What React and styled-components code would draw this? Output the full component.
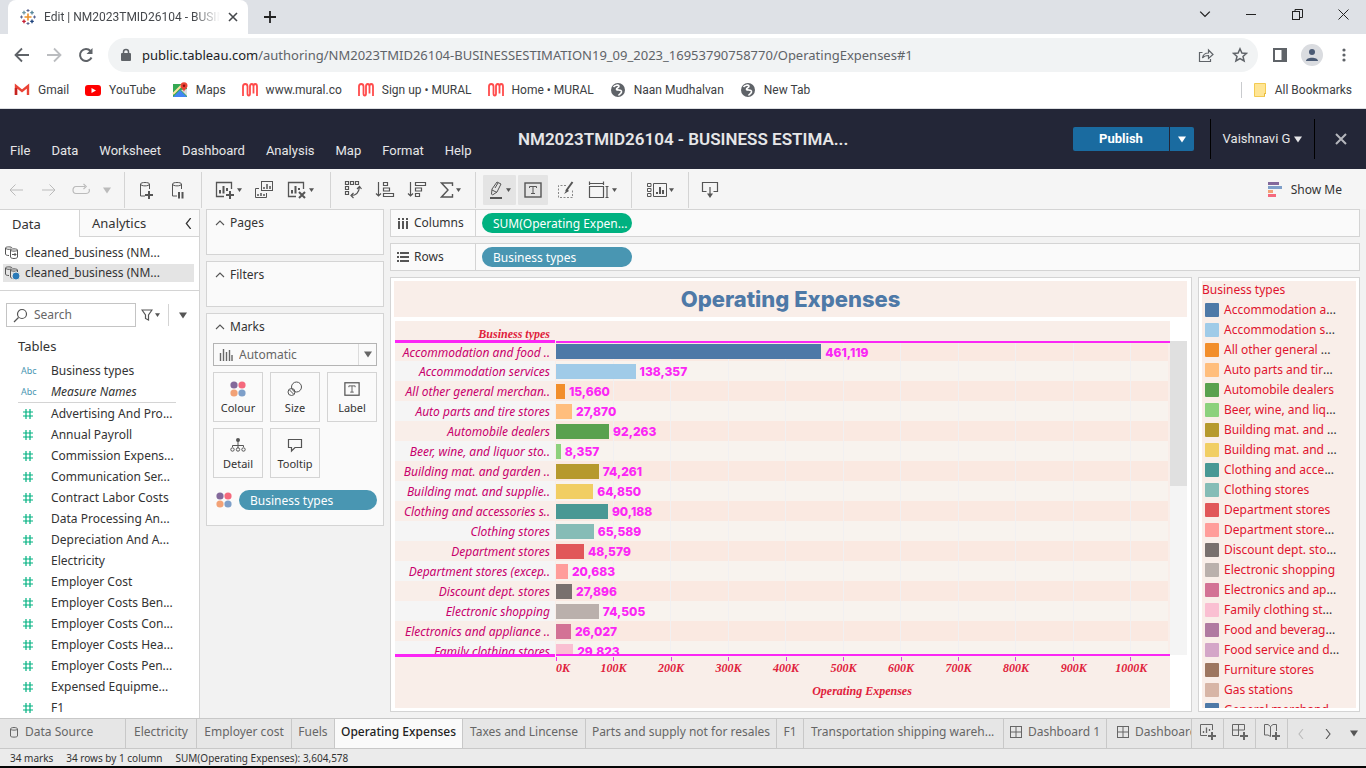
import React from "react";
import styled, { createGlobalStyle, css } from "styled-components";

const Global = createGlobalStyle`
  *, *::before, *::after { box-sizing: border-box; }
  body { margin: 0; font: 12px/16px "Noto Sans", sans-serif; color: #333; background: #f2f2f2; }
  button, input, select { font: inherit; color: inherit; margin: 0; }
  button { padding: 0; border: 0; background: none; border-radius: 0; display: flex; align-items: center; justify-content: center; }
  a { color: inherit; text-decoration: none; }
  ul { list-style: none; margin: 0; padding: 0; }
  h1, h2, p { margin: 0; font-weight: 400; font-size: inherit; }
  svg { display: block; flex: none; }
`;

/* ---------- data ---------- */
const rows = [
  ["Accommodation and food ..", 461119, "#4e79a7"],
  ["Accommodation services", 138357, "#a0cbe8"],
  ["All other general merchan..", 15660, "#f28e2b"],
  ["Auto parts and tire stores", 27870, "#ffbe7d"],
  ["Automobile dealers", 92263, "#59a14f"],
  ["Beer, wine, and liquor sto..", 8357, "#8cd17d"],
  ["Building mat. and garden ..", 74261, "#b6992d"],
  ["Building mat. and supplie..", 64850, "#f1ce63"],
  ["Clothing and accessories s..", 90188, "#499894"],
  ["Clothing stores", 65589, "#86bcb6"],
  ["Department stores", 48579, "#e15759"],
  ["Department stores (excep..", 20683, "#ff9d9a"],
  ["Discount dept. stores", 27896, "#79706e"],
  ["Electronic shopping", 74505, "#bab0ac"],
  ["Electronics and appliance ..", 26027, "#d37295"],
  ["Family clothing stores", 29823, "#fabfd2"],
];
const legend = [
  ["Accommodation a", 1, "#4e79a7"], ["Accommodation s", 1, "#a0cbe8"], ["All other general ", 1, "#f28e2b"],
  ["Auto parts and tir", 1, "#ffbe7d"], ["Automobile dealers", 0, "#59a14f"], ["Beer, wine, and liq", 1, "#8cd17d"],
  ["Building mat. and ", 1, "#b6992d"], ["Building mat. and ", 1, "#f1ce63"], ["Clothing and acce", 1, "#499894"],
  ["Clothing stores", 0, "#86bcb6"], ["Department stores", 0, "#e15759"], ["Department store", 1, "#ff9d9a"],
  ["Discount dept. sto", 1, "#79706e"], ["Electronic shopping", 0, "#bab0ac"], ["Electronics and ap", 1, "#d37295"],
  ["Family clothing st", 1, "#fabfd2"], ["Food and beverag", 1, "#b07aa1"], ["Food service and d", 1, "#d4a6c8"],
  ["Furniture stores", 0, "#9d7660"], ["Gas stations", 0, "#d7b5a6"], ["General merchand", 1, "#4e79a7"],
];
const fields = ["Advertising And Pro...", "Annual Payroll", "Commission Expens...", "Communication Ser...", "Contract Labor Costs",
  "Data Processing An...", "Depreciation And A...", "Electricity", "Employer Cost", "Employer Costs Ben...", "Employer Costs Con...",
  "Employer Costs Hea...", "Employer Costs Pen...", "Expensed Equipme...", "F1"];
const ticks = ["100K", "200K", "300K", "400K", "500K", "600K", "700K", "800K", "900K", "1000K"];
const AXIS_MAX = 1063800;

/* ---------- icons ---------- */
const Svg = styled.svg.attrs({ "aria-hidden": true })`
  fill: none;
  stroke: currentColor;
  stroke-width: ${(p) => p.$sw || 1};
`;
const Icon = ({ w = 20, h = w, sw, children }) => (
  <Svg width={w} height={h} viewBox={`0 0 ${w} ${h}`} $sw={sw}>{children}</Svg>
);
const Caret = ({ s = 5 }) => (
  <Svg width={s} height={s - 1} viewBox="0 0 8 6"><path d="M0 0H8L4 6Z" fill="currentColor" stroke="none" /></Svg>
);
const TableauMark = () => (
  <Icon w={16} sw={1.4}>
    <path d="M8 4.5V11.5M4.5 8H11.5" stroke="#eb912c" strokeWidth="1.6" />
    <path d="M4 1.8V5.4M2.2 3.6H5.8" stroke="#7199a6" /><path d="M12 1.8V5.4M10.2 3.6H13.8" stroke="#59879b" />
    <path d="M4 10.6V14.2M2.2 12.4H5.8" stroke="#c72035" /><path d="M12 10.6V14.2M10.2 12.4H13.8" stroke="#1f447e" />
    <path d="M8 0V3M6.5 1.5H9.5" stroke="#5b6591" strokeWidth="1" /><path d="M8 13V16M6.5 14.5H9.5" stroke="#5b6591" strokeWidth="1" />
    <path d="M1.5 6.5V9.5M0 8H3M14.5 6.5V9.5M13 8H16" stroke="#5b6591" strokeWidth="1" />
  </Icon>
);
const GmailIcon = () => (
  <Icon w={16}><path d="M2 13V4L8 9L14 4V13" stroke="#ea4335" strokeWidth="2.4" /><path d="M2 6V13" stroke="#c5221f" strokeWidth="2.4" /></Icon>
);
const YouTubeIcon = () => (
  <Icon w={16}><rect x="0" y="3" width="16" height="11" rx="3" fill="#f00" stroke="none" /><path d="M6.5 6V11L11 8.5Z" fill="#fff" stroke="none" /></Icon>
);
const MapsIcon = () => (
  <Icon w={16}>
    <path d="M1 2H11L15 6V15H1Z" fill="#34a853" stroke="none" /><path d="M1 15L8 8L15 15Z" fill="#4285f4" stroke="none" />
    <path d="M9 8L15 14V7Z" fill="#dadce0" stroke="none" /><path d="M1 12L10 3" stroke="#fbe3a0" strokeWidth="2" />
    <path d="M12 10C12 8 8.500 6.500 8.500 3.800A3.500 3.500 0 0 1 15.500 3.800C15.500 6.500 12 8 12 10Z" fill="#ea4335" stroke="none" /><circle cx="12" cy="3.800" r="1.200" fill="#811" stroke="none" />
  </Icon>
);
const MuralIcon = () => (
  <Icon w={16}>
    <path d="M1 14V4.500Q1 2 3.200 2Q5.500 2 5.500 4.500V11.500Q5.500 13.500 6.800 13.500Q8 13.500 8 11.500V4.500Q8 2 9.800 2Q11.500 2 11.500 4.500V11.500M11.500 4.500Q11.500 2 13.200 2Q15 2 15 4.500V14" stroke="#ff4b4b" strokeWidth="1.800" />
  </Icon>
);
const GlobeIcon = () => (
  <Icon w={16}><circle cx="8" cy="8" r="7" fill="#5f6368" stroke="none" /><path d="M3.500 5C5 3 8 2.500 9 4C9.500 6 6 5.500 6.500 7.500C8 8.500 12 7.500 11.500 10C11 12 9 12 8.500 13.500" stroke="#fff" strokeWidth="1.600" /></Icon>
);
const FolderIcon = () => (
  <Icon w={14} h={16}><path d="M1.500 1.500H12.500V11.500H11.500V14.500H1.500Z" fill="#ffe594" stroke="#f3cb52" /><path d="M11.500 14.500V11.500H13" stroke="#e8b93c" /></Icon>
);
const DbShape = () => <path d="M3.500 4V16H8M3.500 4C3.500 2 12.500 2 12.500 4V9M3.500 4C3.500 6.500 12.500 6.500 12.500 4" />;
const NewSheetIcon = () => (
  <Icon w={20}><path d="M9 16.500H1.500V2.500H16.500V9" strokeWidth="1.300" /><path d="M5 13.500V10M8.500 13.500V6M12 11V8" strokeWidth="2" /><path d="M15 11V19M11 15H19" strokeWidth="2" /></Icon>
);
const ClearSheetIcon = () => (
  <Icon w={20}><path d="M9 16.500H1.500V2.500H16.500V9" strokeWidth="1.300" /><path d="M5 13.500V10M8.500 13.500V6M12 10V8" strokeWidth="2" /><path d="M12 12L18 18M18 12L12 18" strokeWidth="2" /></Icon>
);
const TextBoxIcon = ({ s = 18 }) => (
  <Svg width={s} height={s} viewBox="0 0 18 18"><rect x="1" y="2" width="16" height="14" strokeWidth="1.400" /><path d="M5.500 7V5.500H12.500V7M9 5.500V12.500M7 12.500H11" /></Svg>
);
const DotsIcon = () => (
  <Icon w={16}>
    <g stroke="none"><circle cx="4" cy="4" r="3.600" fill="#83699b" /><circle cx="12" cy="4" r="3.600" fill="#f5697d" /><circle cx="4" cy="12" r="3.600" fill="#f2a277" /><circle cx="12" cy="12" r="3.600" fill="#7e9fc9" /></g>
  </Icon>
);
const GridIcon = () => <Icon w={12}><rect x=".5" y=".5" width="11" height="11" /><path d="M6 0V12M0 6H12" /></Icon>;
const SourceIcon = ({ active }) => (
  <Icon w={16}>
    <path d="M.5 3C.5 1.500 7 1.500 7 3M.5 3V9C.5 10 2 10.500 4 10.500M.5 3C.5 4.500 5 4.500 6 4" />
    <path d="M5.500 5C5.500 3.500 12.500 3.500 12.500 5V12C12.500 14 5.500 14 5.500 12ZM5.500 5C5.500 6.500 12.500 6.500 12.500 5M7 9.500H11M9.500 8L11 9.500L9.500 11" />
    {active && <circle cx="11" cy="11" r="4" fill="#2a7ab8" stroke="#e4e4e4" />}
  </Icon>
);
const HashIcon = () => <Icon w={12} sw={1.200}><path d="M4 1V11M8 1V11M1 4H11M1 8H11" stroke="#00b180" /></Icon>;
const Chevron = ({ dir, s = 10 }) => (
  <Svg width={s} height={s} viewBox="0 0 10 10" $sw={1.100}><path d={{ up: "M1 7L5 3L9 7", left: "M7 0L3 5L7 10", right: "M3 0L7 5L3 10", down: "M1 3L5 7L9 3" }[dir]} /></Svg>
);

/* ---------- browser chrome ---------- */
const Screen = styled.div`display: flex; flex-direction: column; height: 100vh; overflow: hidden;`;
const TabStrip = styled.div`display: flex; align-items: stretch; height: 34px; flex: none; background: #dee1e6; padding-left: 8px;`;
const BrowserTab = styled.div`
  display: flex; align-items: center; gap: 8px; width: 240px; padding: 0 10px 0 12px; background: #fff; border-radius: 8px 8px 0 0; color: #45484c; font: 12px/16px Roboto, sans-serif;
  span { flex: 1; overflow: hidden; white-space: nowrap; mask-image: linear-gradient(to right, #000 85%, transparent); }
`;
const StripButton = styled.button`width: ${(p) => p.$w || 46}px; color: #222;`;
const WindowButtons = styled.div`display: flex; margin-left: auto; padding-bottom: 6px;`;
const NavBar = styled.div`display: flex; align-items: center; height: 42px; flex: none; background: #fff; padding: 0 6px; color: #5f6368;`;
const NavButton = styled.button`width: 32px; height: 32px; color: ${(p) => (p.$dim ? "#bbbdc0" : "#5f6368")};`;
const UrlBox = styled.div`
  display: flex; align-items: center; flex: 1; height: 34px; margin: 0 6px; padding: 0 10px 0 12px; border-radius: 17px; background: #f1f3f4; gap: 10px;
`;
const UrlText = styled.p`flex: 1; font: 13px/18px "Noto Sans", sans-serif; color: #5f6368; white-space: nowrap; b { font-weight: 400; color: #202124; }`;
const Avatar = styled.button`width: 22px; height: 22px; border-radius: 11px; background: #dadce0; margin: 0 5px; overflow: hidden;`;
const Bookmarks = styled.nav`
  display: flex; align-items: center; gap: 16px; height: 33px; flex: none; padding: 0 14px 4px; background: #fff; border-bottom: 1px solid #dcdee1; color: #3c4043; font: 12px/16px Roboto, sans-serif;
`;
const Bookmark = styled.a`display: flex; align-items: center; gap: 8px; white-space: nowrap;`;
const AllBookmarks = styled(Bookmark)`margin-left: auto; border-left: 1px solid #c9cbce; padding-left: 11px;`;

/* ---------- application header ---------- */
const Header = styled.header`display: grid; grid-template-columns: 1fr 330px 1fr; height: 60px; flex: none; background: #232637; color: #e6e6e8; font: 13px/18px Roboto, sans-serif;`;
const Menu = styled.nav`display: flex; gap: 21px; align-items: flex-end; padding: 0 0 9px 10px;`;
const BookTitle = styled.h1`align-self: center; font: 600 17px/22px Roboto, sans-serif; white-space: nowrap; text-align: center;`;
const HeaderRight = styled.div`display: flex; align-items: center; justify-content: flex-end;`;
const PublishGroup = styled.div`display: flex; gap: 1px; margin-right: 16px;`;
const Publish = styled.button`
  height: 24px; width: ${(p) => (p.$small ? 24 : 96)}px; background: #1a6ba0; color: #fff; font-weight: 700; border-radius: ${(p) => (p.$small ? "0 2px 2px 0" : "2px 0 0 2px")};
`;
const UserButton = styled.button`height: 40px; width: 105px; gap: 4px; border: solid #000; border-width: 0 1px;`;
const CloseButton = styled.button`width: 51px; height: 40px; color: #b5b6bc;`;

/* ---------- toolbar ---------- */
const Toolbar = styled.div`display: flex; align-items: center; height: 40px; flex: none; background: #f5f5f5; color: #555; padding: 2px 24px 0 0;`;
const ToolGroup = styled.div`display: flex; align-items: center; height: 36px; padding: 0 ${(p) => p.$pad || 12}px; gap: ${(p) => p.$gap || 12}px; border-right: 1px solid #d4d4d4; width: ${(p) => p.$w}px;`;
const Tool = styled.button`
  gap: 2px; height: 30px; width: ${(p) => p.$w || 20}px; flex: none;
  ${(p) => p.$on && css`background: #e4e4e4; border-radius: 1px;`}
  ${(p) => p.$dim && css`color: #bbb;`}
`;
const ShowMe = styled.button`margin-left: auto; gap: 9px; color: #333;`;

/* ---------- workspace ---------- */
const Workspace = styled.main`display: grid; grid-template-columns: 200px 184px minmax(0, 1fr); flex: 1; min-height: 0; padding-right: 6px;`;
const DataPane = styled.section`display: flex; flex-direction: column; background: #fff; border-right: 1px solid #d4d4d4; border-top: 1px solid #d4d4d4; overflow: hidden;`;
const PaneTabs = styled.div`display: flex; height: 27px; flex: none; font-size: 13px;`;
const PaneTab = styled.button`
  justify-content: flex-start; padding-left: 12px; width: 79px;
  ${(p) => p.$back && css`flex: 1; justify-content: space-between; padding-right: 5px; background: #fafafa; border: solid #d4d4d4; border-width: 0 0 1px 1px;`}
`;
const Sources = styled.ul`display: grid; gap: 1px; padding: 5px 5px 8px 3px; border-bottom: 1px solid #d4d4d4;`;
const Source = styled.li`display: flex; align-items: center; gap: 4px; height: ${(p) => (p.$on ? 18 : 21)}px; padding-left: 2px; white-space: nowrap; color: #555; background: ${(p) => (p.$on ? "#e4e4e4" : "none")}; span { color: #333; }`;
const SearchRow = styled.div`display: flex; align-items: center; height: 24px; margin: 12px 11px 0 6px; color: #555;`;
const SearchBox = styled.label`display: flex; align-items: center; gap: 6px; width: 130px; height: 24px; padding: 0 6px; border: 1px solid #c4c4c4; input { width: 90px; border: 0; padding: 0; outline: 0; background: none; } input::placeholder { color: #666; opacity: 1; }`;
const FilterButton = styled.button`gap: 2px; width: 33px; height: 22px; border-right: 1px solid #d4d4d4; padding-right: 3px;`;
const PaneMenu = styled.button`margin-left: auto; width: 10px; height: 22px;`;
const TablesTitle = styled.h2`font-size: 13px; line-height: 18px; margin: 10px 0 5px 18px;`;
const FieldList = styled.ul`margin-left: 18px; width: 158px; ${(p) => p.$divided && css`border-bottom: 1px solid #d4d4d4;`}`;
const Field = styled.li`display: grid; grid-template-columns: 33px 1fr; align-items: center; height: 21px; white-space: nowrap; svg { margin-left: 4px; } em { font-style: italic; }`;
const Abc = styled.small`font-size: 9px; color: #4996b2; padding-left: 3px;`;

const Shelves = styled.section`display: flex; flex-direction: column; gap: 6px; padding-left: 6px;`;
const Card = styled.div`background: #fafafa; border: 1px solid #d4d4d4; height: ${(p) => p.$h}px;`;
const CardTitle = styled.h2`display: flex; align-items: center; gap: 5px; height: 26px; padding-left: 8px; svg { color: #555; }`;
const MarkType = styled.div`
  display: grid; align-items: center; margin: 3px 6px 6px; height: 23px; color: #666;
  svg, select { grid-area: 1 / 1; }
  svg { pointer-events: none; }
  svg:first-of-type { margin-left: 6px; }
  svg:last-of-type { justify-self: end; margin: 0 5px 0 0; }
`;
const MarkSelect = styled.select`
  appearance: none; height: 23px; padding: 0 0 0 25px; border: 1px solid #b4b4b4; border-radius: 0;
  background: linear-gradient(#dcdcdc, #dcdcdc) calc(100% - 17px) 0 / 1px 100% no-repeat #fafafa; font-size: 12px; color: #666;
`;
const MarkGrid = styled.div`display: grid; grid-template-columns: repeat(3, 50px); gap: 6px 7px; margin: 0 6px 12px;`;
const MarkButton = styled.button`flex-direction: column; gap: 4px; height: 50px; border: 1px solid #d4d4d4; font-size: 11px; line-height: 14px; color: #333; padding-top: 2px; svg { color: #555; }`;
const PillRow = styled.div`display: flex; align-items: center; gap: 7px; margin: 0 6px 0 9px;`;
const Pill = styled.button`
  justify-content: flex-start; height: 20px; padding: 1px 0 0 11px; border-radius: 10px; color: #fff; white-space: nowrap;
  background: ${(p) => (p.$green ? "#00b180" : "#4996b2")}; ${(p) => (p.$fill ? css`flex: 1;` : css`width: 150px;`)}
`;

const Stage = styled.section`display: grid; grid-template-columns: minmax(0, 1fr) 162px; grid-template-rows: 28px 28px minmax(0, 1fr); gap: 6px; padding: 0 0 6px 6px; min-width: 0; min-height: 0;`;
const Shelf = styled.div`grid-column: 1 / -1; display: flex; align-items: center; background: #fafafa; border: 1px solid #d4d4d4; gap: 6px;`;
const ShelfLabel = styled.span`display: flex; align-items: center; gap: 5px; width: 85px; height: 100%; padding-left: 6px; border-right: 1px solid #d4d4d4; svg { color: #555; }`;
const Viz = styled.div`display: grid; grid-template-rows: 36px minmax(0, 1fr); gap: 4px; padding: 3px 4px 3px 3px; background: #fff; border: 1px solid #d4d4d4; min-height: 0;`;
const VizTitle = styled.h2`display: flex; align-items: center; justify-content: center; background: #f9eee9; font: 800 22px/28px Inter, sans-serif; color: #4e79a7;`;
const ChartArea = styled.div`display: grid; grid-template-columns: minmax(0, 1fr) 17px; margin-left: 1px; min-height: 0;`;
const Chart = styled.div`display: grid; grid-template-rows: 19px minmax(0, 1fr) 51px; background: #f9eee9; min-height: 0;`;
const Split = styled.div`display: grid; grid-template-columns: 160px minmax(0, 1fr); column-gap: 1px; min-height: 0;`;
const serif = css`font: italic 700 12px/14px "Liberation Serif", serif; color: #e0223c;`;
const HeadLabel = styled.div`${serif} text-align: right; padding: 6px 5px 0 0;`;
const Body = styled.div`display: grid; grid-template-rows: 3px minmax(0, 1fr) 3px; min-height: 0;`;
const Rule = styled(Split)`
  &::before { content: ""; background: #fb26f5; height: 3px; }
  &::after { content: ""; background: #fb26f5; height: 2px; margin-top: ${(p) => (p.$top ? 1 : 0)}px; }
`;
const RowsClip = styled.div`overflow: hidden; min-height: 0;`;
const Row = styled(Split)`height: ${(p) => (p.$first ? 18 : 20)}px; align-items: stretch;`;
const RowLabel = styled.div`
  display: flex; align-items: center; justify-content: flex-end; padding: 1px 5px 0 0; white-space: nowrap; font: italic 12px/16px "Noto Sans", sans-serif; color: #c8006c;
  background: ${(p) => (p.$odd ? "#f9eee9" : "#f5f5f5")};
`;
const Plot = styled.div`
  display: flex; align-items: center; gap: 4px; margin-right: 2px; padding-top: 1px; color: #fb26f5; font: 800 12px/16px Inter, sans-serif; white-space: nowrap;
  background: repeating-linear-gradient(to right, transparent 0 calc(9.4% - 1px), #f1f0f1 calc(9.4% - 1px) 9.4%), ${(p) => (p.$odd ? "#fae9e1" : "#f8f3ee")};
`;
const Bar = styled.i`display: block; height: 15px; flex: none; align-self: flex-start; margin-top: ${(p) => (p.$first ? 0 : 2)}px;`;
const Axis = styled.div`grid-column: 2; margin-right: 2px; ${serif}`;
const TickMarks = styled.div`height: 4px; border-left: 1px solid #fb26f5; background: repeating-linear-gradient(to right, transparent 0 calc(9.4% - 1px), #e13ee6 calc(9.4% - 1px) 9.4%);`;
const TickLabels = styled.div`display: flex; margin-bottom: 9px; span { flex: 0 0 9.4%; text-align: center; } span:first-child { flex-basis: 4.7%; text-align: left; }`;
const AxisTitle = styled.p`text-align: center; font-weight: 700;`;
const Scroll = styled.div`margin: 20px 0 53px; background: #f4f4f4; &::before { content: ""; display: block; height: 145px; background: #e0e0e0; }`;
const LegendCard = styled.aside`background: #fff; border: 1px solid #d4d4d4; padding: 3px; min-height: 0;`;
const LegendInner = styled.div`height: 100%; overflow: hidden; background: #f9eee9; color: #e0142d; h2 { height: 19px; line-height: 18px; }`;
const LegendRow = styled.li`display: flex; align-items: center; gap: 5px; height: 20px; padding-left: 3px; white-space: pre; span { color: #333; margin-left: -5px; }`;
const Swatch = styled.i`width: 14px; height: 14px; border-radius: 1px; flex: none;`;

/* ---------- bottom ---------- */
const SheetTabs = styled.nav`display: flex; height: 31px; flex: none; border: solid #c8c8c8; border-width: 1px 0; background: #e6e6e6; color: #666;`;
const SheetTab = styled.button`
  gap: 6px; flex: 0 ${(p) => (p.$shrink ? 1 : 0)} ${(p) => p.$w}px; padding-bottom: 4px; border-right: 1px solid #c8c8c8; white-space: nowrap; overflow: hidden;
  ${(p) => p.$on && css`background: #fafafa; color: #222; font-weight: 500;`}
  ${(p) => p.$start && css`justify-content: flex-start; padding-left: ${p.$start}px;`}
`;
const SheetNav = styled.div`display: flex; flex: 1; justify-content: space-between; padding: 0 7px 0 8px;`;
const NavArrow = styled.button`width: 10px; color: ${(p) => (p.$dim ? "#bbb" : "#555")};`;
const Status = styled.footer`display: flex; gap: 13px; align-items: center; height: 19px; flex: none; padding: 0 10px; background: #ebebeb; border-bottom: 2px solid #050505; font-size: 10px; line-height: 14px;`;

const AddCorner = () => <path d="M12 9V17M8 13H16" strokeWidth="2" />;

export default function App() {
  return (
    <Screen>
      <Global />
      <TabStrip>
        <BrowserTab><TableauMark /><span>Edit | NM2023TMID26104 - BUSINESS</span><button aria-label="Close tab"><Icon w={10} sw={1.600}><path d="M1 1L9 9M9 1L1 9" /></Icon></button></BrowserTab>
        <StripButton $w={44} aria-label="New tab"><Icon w={12} sw={1.800}><path d="M6 0V12M0 6H12" /></Icon></StripButton>
        <WindowButtons>
          <StripButton aria-label="Search tabs"><Chevron dir="down" s={12} /></StripButton>
          <StripButton aria-label="Minimise"><Icon w={10}><path d="M0 5.500H10" /></Icon></StripButton>
          <StripButton aria-label="Restore"><Icon w={11}><rect x=".5" y="2.500" width="7" height="8" /><path d="M3 2.500V.5H10.500V8.500H8" /></Icon></StripButton>
          <StripButton aria-label="Close"><Icon w={11}><path d="M.5 .5L10.500 10.500M10.500 .5L.5 10.500" /></Icon></StripButton>
        </WindowButtons>
      </TabStrip>
      <NavBar>
        <NavButton aria-label="Back"><Icon w={16} sw={1.800}><path d="M15 8H2M8 1.500L1.500 8L8 14.500" /></Icon></NavButton>
        <NavButton $dim aria-label="Forward"><Icon w={16} sw={1.800}><path d="M1 8H14M8 1.500L14.500 8L8 14.500" /></Icon></NavButton>
        <NavButton aria-label="Reload"><Icon w={16} sw={2}><path d="M13.500 10.500A6 6 0 1 1 12.500 4" /><path d="M14.500 1V7H8.500Z" fill="currentColor" stroke="none" /></Icon></NavButton>
        <UrlBox>
          <Icon w={12} h={14}><rect x="1" y="5" width="10" height="8" rx="1" fill="currentColor" stroke="none" /><path d="M3.500 6V4A2.500 2.500 0 0 1 8.500 4V6" strokeWidth="1.500" /></Icon>
          <UrlText><b>public.tableau.com</b>/authoring/NM2023TMID26104-BUSINESSESTIMATION19_09_2023_16953790758770/OperatingExpenses#1</UrlText>
          <NavButton aria-label="Share"><Icon w={16} sw={1.200}><path d="M4.500 5.500H1.500V14.500H12.500V12M4.500 11C5 7.500 7 6 10.500 6V3L15 7.500L10.500 11.500V8.500C8 8.500 6 9 4.500 11Z" /></Icon></NavButton>
          <button aria-label="Bookmark"><Icon w={16} sw={1.500}><path d="M8 1.800L9.900 6L14.500 6.400L11 9.500L12.100 14L8 11.600L3.900 14L5 9.500L1.500 6.400L6.100 6Z" /></Icon></button>
        </UrlBox>
        <NavButton aria-label="Side panel"><Icon w={14} h={14}><rect x="1" y="1" width="12" height="12" strokeWidth="2" /><path d="M8.500 1H13V13H8.500Z" fill="currentColor" stroke="none" /></Icon></NavButton>
        <Avatar aria-label="Profile"><Icon w={16}><circle cx="8" cy="5" r="3" fill="#4a5a74" stroke="none" /><path d="M2 14C2 9.500 14 9.500 14 14Z" fill="#4a5a74" stroke="none" /></Icon></Avatar>
        <NavButton aria-label="Menu"><Icon w={4} h={14}><g fill="currentColor" stroke="none"><circle cx="2" cy="2" r="1.600" /><circle cx="2" cy="7" r="1.600" /><circle cx="2" cy="12" r="1.600" /></g></Icon></NavButton>
      </NavBar>
      <Bookmarks>
        <Bookmark href="#"><GmailIcon />Gmail</Bookmark>
        <Bookmark href="#"><YouTubeIcon />YouTube</Bookmark>
        <Bookmark href="#"><MapsIcon />Maps</Bookmark>
        <Bookmark href="#"><MuralIcon />www.mural.co</Bookmark>
        <Bookmark href="#"><MuralIcon />Sign up • MURAL</Bookmark>
        <Bookmark href="#"><MuralIcon />Home • MURAL</Bookmark>
        <Bookmark href="#"><GlobeIcon />Naan Mudhalvan</Bookmark>
        <Bookmark href="#"><GlobeIcon />New Tab</Bookmark>
        <AllBookmarks href="#"><FolderIcon />All Bookmarks</AllBookmarks>
      </Bookmarks>
      <Header>
        <Menu>{["File", "Data", "Worksheet", "Dashboard", "Analysis", "Map", "Format", "Help"].map((m) => <button key={m}>{m}</button>)}</Menu>
        <BookTitle>NM2023TMID26104 - BUSINESS ESTIMA...</BookTitle>
        <HeaderRight>
          <PublishGroup><Publish>Publish</Publish><Publish $small aria-label="Publish options"><Caret s={8} /></Publish></PublishGroup>
          <UserButton>Vaishnavi G <Caret s={8} /></UserButton>
          <CloseButton aria-label="Close workbook"><Icon w={12} sw={2}><path d="M1 1L11 11M11 1L1 11" /></Icon></CloseButton>
        </HeaderRight>
      </Header>
      <Toolbar>
        <ToolGroup $w={125} $pad={6} $gap={13}>
          <Tool $dim aria-label="Undo"><Icon w={16}><path d="M15 8H2M7.500 2.500L2 8L7.500 13.500" /></Icon></Tool>
          <Tool $dim aria-label="Redo"><Icon w={16}><path d="M1 8H14M8.500 2.500L14 8L8.500 13.500" /></Icon></Tool>
          <Tool $dim $w={18} aria-label="Replay"><Icon w={18} h={14} sw={1.200}><path d="M13 3.500H4C0 3.500 0 10.500 4 10.500H14C17 10.500 18 8 17 6M11.500 .8L14.200 3.500L11.500 6.200" /></Icon></Tool>
          <Tool $dim $w={8} aria-label="Replay options"><Caret s={8} /></Tool>
        </ToolGroup>
        <ToolGroup $w={77}>
          <Tool aria-label="New data source"><Icon w={20}><DbShape /><path d="M12 11V19M8 15H16" strokeWidth="2" /></Icon></Tool>
          <Tool aria-label="Pause updates"><Icon w={20}><DbShape /><path d="M10 12V18.500M13.500 12V18.500" strokeWidth="2" /></Icon></Tool>
        </ToolGroup>
        <ToolGroup $w={129} $pad={13} $gap={13}>
          <Tool $w={26} aria-label="New sheet"><NewSheetIcon /><Caret /></Tool>
          <Tool aria-label="Duplicate"><Icon w={20}><rect x="7.500" y="1.500" width="11" height="9" /><path d="M5 8.500H1.500V17.500H12.500V13" /><path d="M10 9V7M13 9V4M16 9V6M4 16V14M7 16V13M10 16V14" strokeWidth="1.500" /></Icon></Tool>
          <Tool $w={27} aria-label="Clear sheet"><ClearSheetIcon /><Caret /></Tool>
        </ToolGroup>
        <ToolGroup $w={145}>
          <Tool aria-label="Swap"><Icon w={20}><path d="M2.500 1.500H5.500V4.500H2.500ZM7.500 1.500H10.500V4.500H7.500ZM12.500 1.500H15.500V4.500H12.500ZM2.500 6.500H5.500V9.500H2.500ZM2.500 11.500H5.500V14.500H2.500ZM8 15.500C13 15.500 16 12 16.500 7M10.500 13L8 15.500L10.500 18M14 9L16.500 6.500L18.500 9" strokeWidth="1.200" /></Icon></Tool>
          <Tool aria-label="Sort ascending"><Icon w={20}><path d="M3.500 2V16M1 13.500L3.500 16L6 13.500M8.500 2.500H12.500V5.500H8.500ZM8.500 8H14.500V11H8.500ZM8.500 13.500H18.500V16.500H8.500Z" strokeWidth="1.200" /></Icon></Tool>
          <Tool aria-label="Sort descending"><Icon w={20}><path d="M3.500 2V16M1 13.500L3.500 16L6 13.500M8.500 2.500H18.500V5.500H8.500ZM8.500 8H14.500V11H8.500ZM8.500 13.500H12.500V16.500H8.500Z" strokeWidth="1.200" /></Icon></Tool>
          <Tool $w={22} aria-label="Totals"><Icon w={14} h={18} sw={1.400}><path d="M12.500 5V2H1.500L8 9L1.500 16H12.500V13" /></Icon><Caret /></Tool>
        </ToolGroup>
        <ToolGroup $w={156} $pad={7} $gap={2}>
          <Tool $on $w={33} aria-label="Highlight"><Icon w={16} h={20}><path d="M4 9L9 2L13 4L9 12L4.500 15L3.500 14ZM4 10L9 12.500M7 8L10 3" /><path d="M2 18H14" strokeWidth="2" /></Icon><Caret /></Tool>
          <Tool $on $w={30} aria-label="Show mark labels"><TextBoxIcon /></Tool>
          <Tool $w={32} aria-label="Format"><Icon w={18} h={20}><path d="M9 5.500H1.500V17.500H15.500V10" strokeDasharray="2 1.500" stroke="#888" /><path d="M15.500 2L9 11" strokeWidth="2" /><path d="M10 9L12 11L7 14Z" fill="currentColor" stroke="none" /></Icon></Tool>
          <Tool $w={36} aria-label="Fit"><Icon w={22} h={20}><path d="M1.500 1.500V5M15.500 1.500V5M1.500 3.500H15.500M1.500 6.500H15.500V17.500H1.500ZM17.500 6.500H20.500M17.500 17.500H20.500M19 6.500V17.500" strokeWidth="1.200" /></Icon><Caret /></Tool>
        </ToolGroup>
        <ToolGroup $w={57}>
          <Tool $w={32} aria-label="Show cards"><Icon w={20}><path d="M.5 3.500H4V6.500H.5ZM.5 8.500H4V11.500H.5ZM.5 13.500H4V16.500H.5ZM6.500 3.500H19.500V16.500H6.500Z" /><path d="M10 14V12M13 14V7M16 14V10" strokeWidth="2" /></Icon><Caret /></Tool>
        </ToolGroup>
        <Tool $w={42} aria-label="Download"><Icon w={18} h={18}><path d="M5.500 10.500H1.500V1.500H16.500V10.500H12.500M9 6V14" strokeWidth="1.200" /><path d="M6 12.500H12L9 17Z" fill="currentColor" stroke="none" /></Icon></Tool>
        <ShowMe><Icon w={14} h={16}><g stroke="none"><path d="M0 0H11V3H0Z" fill="#83699b" /><path d="M0 4H14V7H0Z" fill="#7e9fc9" /><path d="M0 8H5V11H0Z" fill="#f2a277" /><path d="M0 12H8V15H0Z" fill="#f5697d" /></g></Icon>Show Me</ShowMe>
      </Toolbar>
      <Workspace>
        <DataPane>
          <PaneTabs><PaneTab>Data</PaneTab><PaneTab $back>Analytics<Chevron dir="left" s={11} /></PaneTab></PaneTabs>
          <Sources>
            <Source><SourceIcon /><span>cleaned_business (NM...</span></Source>
            <Source $on><SourceIcon active /><span>cleaned_business (NM...</span></Source>
          </Sources>
          <SearchRow>
            <SearchBox><Icon w={15} sw={1.200}><circle cx="9" cy="6" r="4.500" /><path d="M5.500 9.500L1 14" /></Icon><input aria-label="Search fields" placeholder="Search" /></SearchBox>
            <FilterButton aria-label="Filter fields"><Icon w={12} sw={1.200}><path d="M1 1H11L7.500 6V11L4.500 9.500V6Z" /></Icon><Caret /></FilterButton>
            <PaneMenu aria-label="Pane menu"><Caret s={8} /></PaneMenu>
          </SearchRow>
          <TablesTitle>Tables</TablesTitle>
          <FieldList $divided>
            <Field><Abc>Abc</Abc><span>Business types</span></Field>
            <Field><Abc>Abc</Abc><em>Measure Names</em></Field>
          </FieldList>
          <FieldList>{fields.map((f) => <Field key={f}><HashIcon /><span>{f}</span></Field>)}</FieldList>
        </DataPane>
        <Shelves>
          <Card $h={46}><CardTitle><Chevron dir="up" />Pages</CardTitle></Card>
          <Card $h={46}><CardTitle><Chevron dir="up" />Filters</CardTitle></Card>
          <Card $h={213}>
            <CardTitle><Chevron dir="up" />Marks</CardTitle>
            <MarkType>
              <MarkSelect aria-label="Mark type"><option>Automatic</option></MarkSelect>
              <Icon w={14} sw={1.400}><path d="M1.500 5V13M4.500 1V13M7.500 4V13M10.500 2V13M13 7V13" /></Icon>
              <Caret s={8} />
            </MarkType>
            <MarkGrid>
              <MarkButton><DotsIcon />Colour</MarkButton>
              <MarkButton><Icon w={16}><circle cx="9.500" cy="6" r="5" /><circle cx="4.500" cy="11" r="3.500" /><path d="M2.500 9L6.500 13" /></Icon>Size</MarkButton>
              <MarkButton><TextBoxIcon s={16} />Label</MarkButton>
              <MarkButton><Icon w={16}><circle cx="8" cy="3" r="2" fill="currentColor" stroke="none" /><path d="M8 4V11M2.500 10V8.500H13.500V10" /><circle cx="2.500" cy="12.500" r="1.700" /><circle cx="8" cy="12.500" r="1.700" /><circle cx="13.500" cy="12.500" r="1.700" /></Icon>Detail</MarkButton>
              <MarkButton><Icon w={16}><path d="M1.500 2.500H14.500V10.500H8L4.500 14V10.500H1.500Z" strokeWidth="1.200" /></Icon>Tooltip</MarkButton>
            </MarkGrid>
            <PillRow><DotsIcon /><Pill $fill>Business types</Pill></PillRow>
          </Card>
        </Shelves>
        <Stage>
          <Shelf><ShelfLabel><Icon w={12}><path d="M2 1V3M6 1V3M10 1V3M2 4V12M6 4V12M10 4V12" strokeWidth="2" /></Icon>Columns</ShelfLabel><Pill $green>SUM(Operating Expen...</Pill></Shelf>
          <Shelf><ShelfLabel><Icon w={12}><path d="M0 2H2M0 6H2M0 10H2M3 2H12M3 6H12M3 10H12" strokeWidth="2" /></Icon>Rows</ShelfLabel><Pill>Business types</Pill></Shelf>
          <Viz>
            <VizTitle>Operating Expenses</VizTitle>
            <ChartArea>
              <Chart>
                <Split><HeadLabel>Business types</HeadLabel></Split>
                <Body>
                  <Rule $top />
                  <RowsClip>
                    {rows.map(([name, value, color], i) => (
                      <Row key={name} $first={i === 0}>
                        <RowLabel $odd={i % 2 === 0}>{name}</RowLabel>
                        <Plot $odd={i % 2 === 0}>
                          <Bar $first={i === 0} style={{ width: `${(value / AXIS_MAX) * 100}%`, background: color }} />
                          {value.toLocaleString("en-US")}
                        </Plot>
                      </Row>
                    ))}
                  </RowsClip>
                  <Rule />
                </Body>
                <Split>
                  <Axis>
                    <TickMarks />
                    <TickLabels><span>0K</span>{ticks.map((t) => <span key={t}>{t}</span>)}</TickLabels>
                    <AxisTitle>Operating Expenses</AxisTitle>
                  </Axis>
                </Split>
              </Chart>
              <Scroll />
            </ChartArea>
          </Viz>
          <LegendCard>
            <LegendInner>
              <h2>Business types</h2>
              <ul>
                {legend.map(([name, cut, color], i) => (
                  <LegendRow key={i}><Swatch style={{ background: color }} />{name}{cut ? <span>...</span> : null}</LegendRow>
                ))}
              </ul>
            </LegendInner>
          </LegendCard>
        </Stage>
      </Workspace>
      <SheetTabs>
        <SheetTab $w={126} $start={9}><Icon w={10} h={12}><path d="M1.500 3V10C1.500 11.500 8.500 11.500 8.500 10V3C8.500 1 1.500 1 1.500 3C1.500 4.500 8.500 4.500 8.500 3" /></Icon>Data Source</SheetTab>
        <SheetTab $w={71}>Electricity</SheetTab>
        <SheetTab $w={95}>Employer cost</SheetTab>
        <SheetTab $w={43}>Fuels</SheetTab>
        <SheetTab $w={128} $on>Operating Expenses</SheetTab>
        <SheetTab $w={123}>Taxes and Lincense</SheetTab>
        <SheetTab $w={191}>Parts and supply not for resales</SheetTab>
        <SheetTab $w={27}>F1</SheetTab>
        <SheetTab $w={200} $start={7}>Transportation shipping wareh...</SheetTab>
        <SheetTab $w={103}><GridIcon />Dashboard 1</SheetTab>
        <SheetTab $w={85} $start={10}><GridIcon />Dashboard 2</SheetTab>
        <SheetTab $w={32} aria-label="New worksheet"><Icon w={16} h={18}><path d="M7 12.500H.5V1.500H12.500V7" /><path d="M3.500 10V8M6.500 10V4.500M9.500 8V6" strokeWidth="1.300" /><AddCorner /></Icon></SheetTab>
        <SheetTab $w={32} aria-label="New dashboard"><Icon w={16} h={18}><path d="M7 12.500H.5V1.500H12.500V7M6.500 1.500V12.500M.5 7H12.500" /><AddCorner /></Icon></SheetTab>
        <SheetTab $w={32} aria-label="New story"><Icon w={16} h={18}><path d="M6.500 3.500L4 1.500H.5V12H4L6.500 13.500V3.500L9 1.500H12.500V8" /><AddCorner /></Icon></SheetTab>
        <SheetNav>
          <NavArrow $dim aria-label="Previous sheet"><Chevron dir="left" /></NavArrow>
          <NavArrow aria-label="Next sheet"><Chevron dir="right" /></NavArrow>
          <NavArrow aria-label="Sheet list"><Caret s={8} /></NavArrow>
        </SheetNav>
      </SheetTabs>
      <Status><span>34 marks</span><span>34 rows by 1 column</span><span>SUM(Operating Expenses): 3,604,578</span></Status>
    </Screen>
  );
}
